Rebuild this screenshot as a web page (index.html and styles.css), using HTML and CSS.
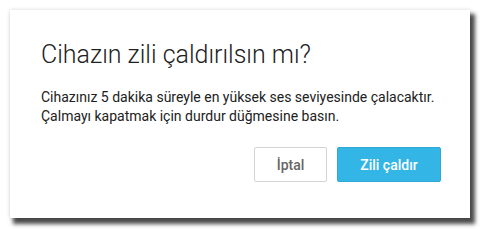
FILE: index.html
```html
<!DOCTYPE html>
<html lang="tr">
<head>
<meta charset="utf-8">
<link rel="stylesheet" href="styles.css">
</head>
<body>
<div class="dialog">
  <h1 class="title">Cihazın zili çaldırılsın mı?</h1>
  <p class="message">Cihazınız 5 dakika süreyle en yüksek ses seviyesinde çalacaktır.<br>Çalmayı kapatmak için durdur düğmesine basın.</p>
  <div class="actions">
    <button class="btn btn-cancel">İptal</button>
    <button class="btn btn-primary">Zili çaldır</button>
  </div>
</div>
</body>
</html>
```
FILE: styles.css
```css
html, body {
  margin: 0;
  padding: 0;
  background: #ffffff;
}
body {
  padding: 10px 0 0 10px;
  height: 229px;
  box-sizing: border-box;
  font-family: Roboto, "Liberation Sans", sans-serif;
}
.dialog {
  box-sizing: border-box;
  width: 460px;
  height: 208px;
  background: #ffffff;
  padding: 0 29px 0 31px;
  box-shadow: 0 0 4px rgba(0,0,0,0.15), 4px 5px 4px 1px rgba(0,0,0,0.7);
  display: flex;
  flex-direction: column;
}
.title {
  margin: 30px 0 0 0;
  font-size: 25px;
  font-weight: 300;
  line-height: 30px;
  color: #212121;
}
.message {
  margin: 18px 0 0 0;
  font-size: 14px;
  line-height: 19px;
  color: #212121;
}
.actions {
  display: flex;
  justify-content: flex-end;
  gap: 10px;
  margin-top: 21px;
}
.btn {
  box-sizing: border-box;
  height: 35px;
  font-family: Roboto, "Liberation Sans", sans-serif;
  font-size: 14px;
  font-weight: 500;
  border-radius: 2px;
  padding: 0;
}
.btn-cancel {
  width: 73px;
  background: #ffffff;
  border: 1px solid #d4d4d4;
  color: #666666;
}
.btn-primary {
  width: 104px;
  background: #33b5e5;
  border: 1px solid #2fa8d6;
  color: #ffffff;
}
```
